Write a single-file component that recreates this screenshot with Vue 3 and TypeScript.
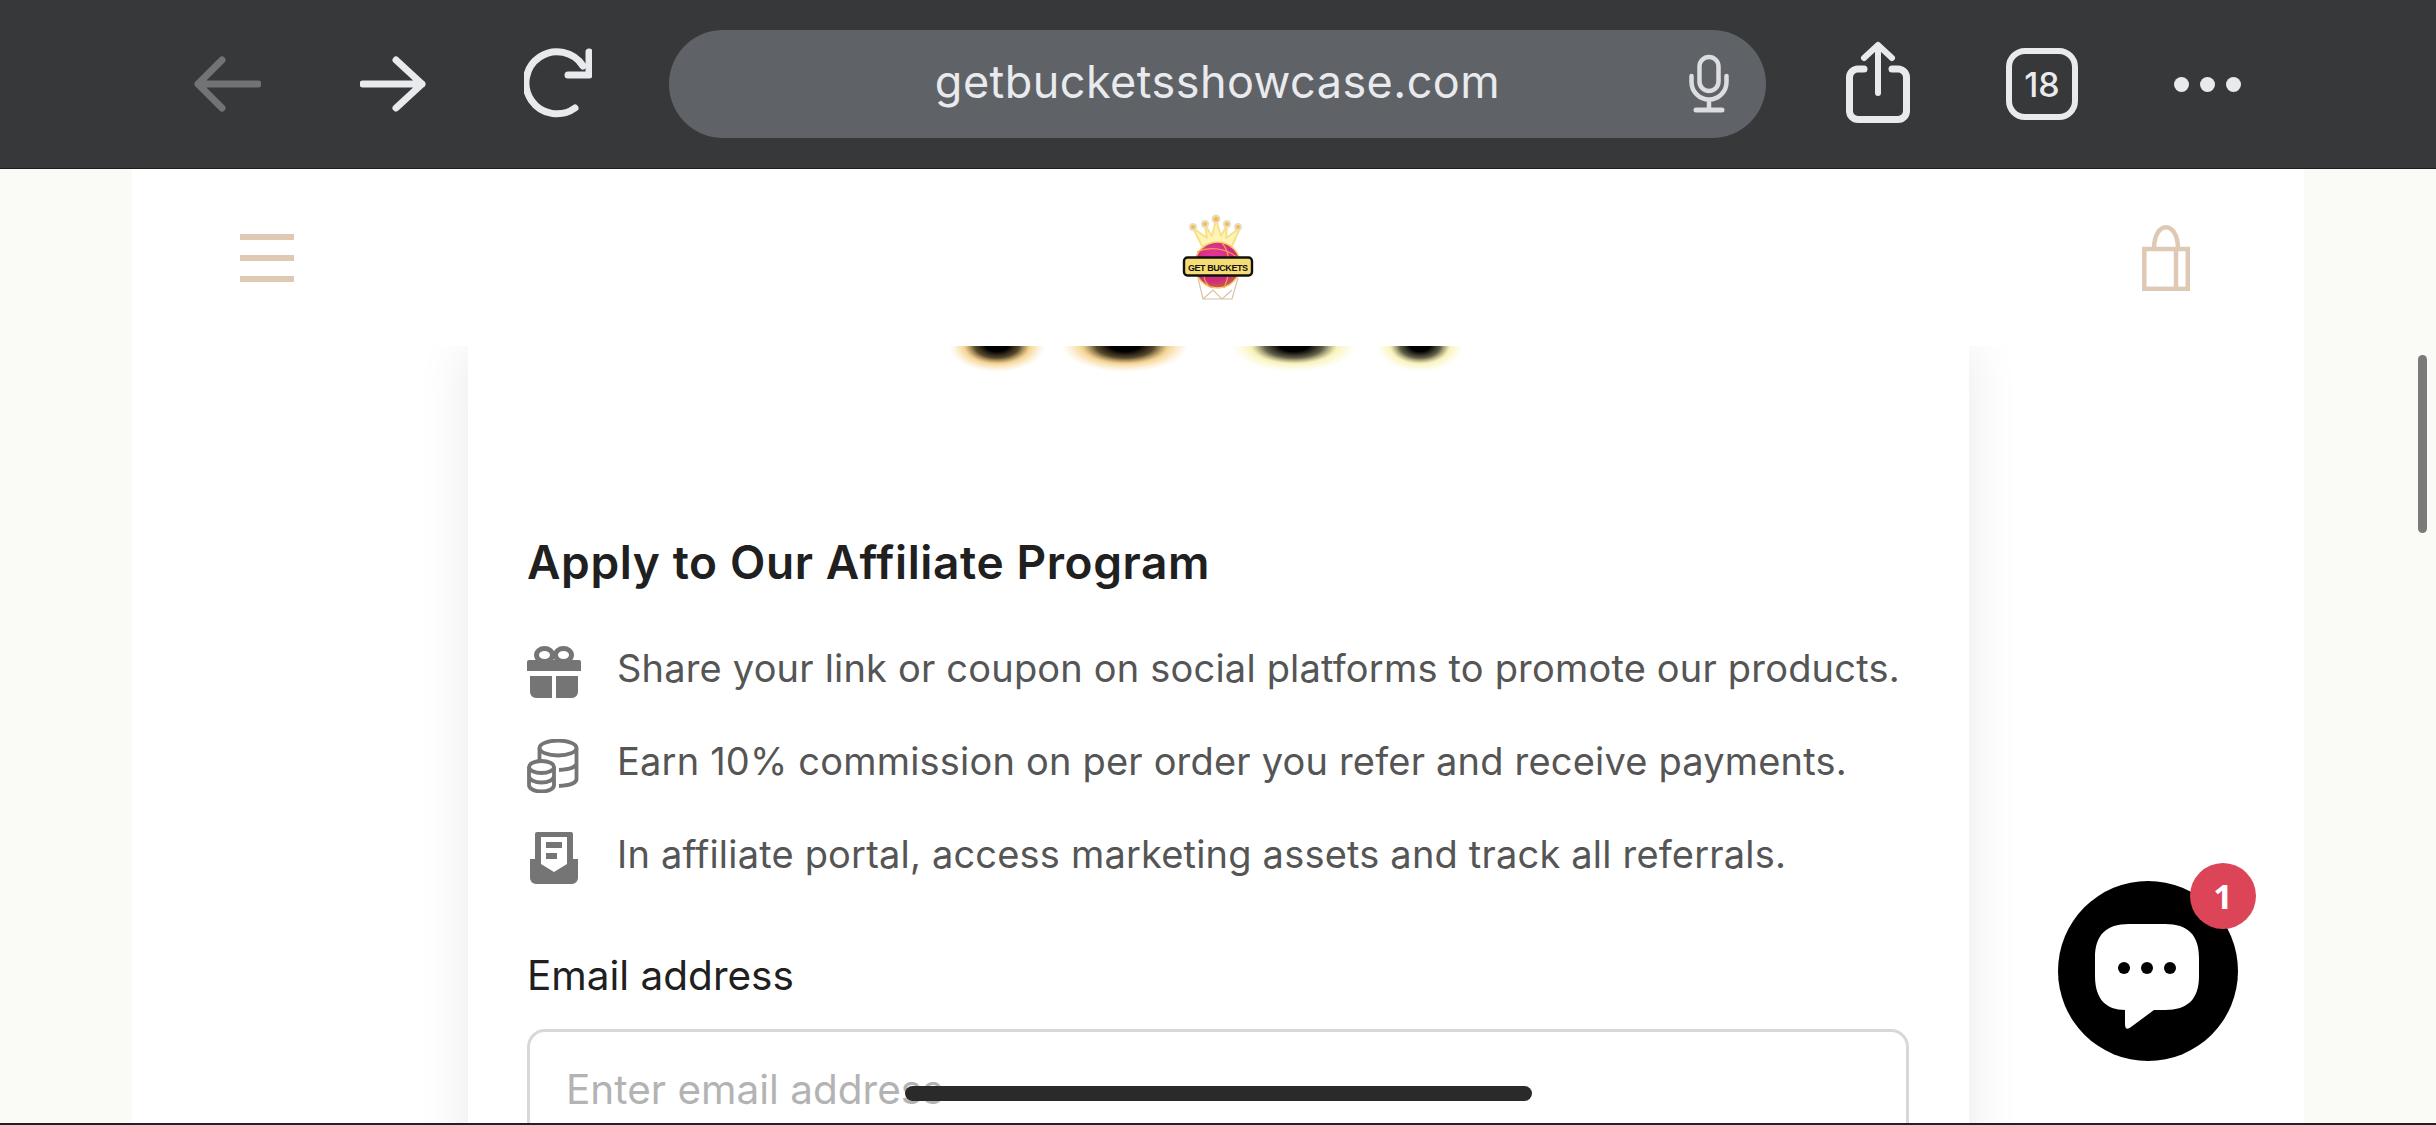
<script setup lang="ts">
const items: { icon: string; text: string }[] = [
  { icon: 'gift', text: 'Share your link or coupon on social platforms to promote our products.' },
  { icon: 'coins', text: 'Earn 10% commission on per order you refer and receive payments.' },
  { icon: 'inbox', text: 'In affiliate portal, access marketing assets and track all referrals.' },
]
</script>

<template>
  <div class="screen">
    <nav class="toolbar">
      <svg class="tool back" viewBox="194 0 67 168" fill="none" stroke="#727374" stroke-width="7" stroke-linecap="round" stroke-linejoin="round">
        <path d="M222 60 198 84 222 108M198 84H258" />
      </svg>
      <svg class="tool forward" viewBox="360 0 66 168" fill="none" stroke="#e9eaee" stroke-width="7" stroke-linecap="round" stroke-linejoin="round">
        <path d="M396 60 422 84 396 108M363 84H422" />
      </svg>
      <svg class="tool reload" viewBox="524 0 68 168" fill="none" stroke="#e9eaee" stroke-linecap="round" stroke-linejoin="round">
        <path stroke-width="7" d="M583 66A31 31 0 1 0 575 108" />
        <path stroke-width="7" d="M589 52V75H568" />
      </svg>
      <div class="address">
        <span class="url">getbucketsshowcase.com</span>
        <svg class="mic" viewBox="1689 50 40 66" fill="none" stroke="#dcdde0" stroke-linecap="round">
          <rect x="1699.500" y="57" width="19" height="34" rx="9.500" stroke-width="4.500" />
          <path stroke-width="4.500" d="M1691.500 76V82A17.500 17.500 0 0 0 1726.500 82V76M1709 100V109" />
          <path stroke-width="5" d="M1696 110H1722" />
        </svg>
      </div>
      <svg class="tool share" viewBox="1846 0 64 168" fill="none" stroke="#e9eaee" stroke-width="7" stroke-linecap="round" stroke-linejoin="round">
        <path d="M1864 69H1858A8.500 8.500 0 0 0 1849.500 77.500V111A8.500 8.500 0 0 0 1858 119.500H1898A8.500 8.500 0 0 0 1906.500 111V77.500A8.500 8.500 0 0 0 1898 69H1892" />
        <path stroke-width="6" d="M1878 93V47M1864 58 1878 45 1892 58" />
      </svg>
      <div class="tabs">18</div>
      <div class="more"><i></i><i></i><i></i></div>
    </nav>

    <div class="shell">
      <header class="site-header">
        <svg class="burger" viewBox="0 0 54 48" fill="#dfc9b5">
          <rect y="0" width="54" height="6" />
          <rect y="21" width="54" height="6" />
          <rect y="42" width="54" height="6" />
        </svg>
        <svg class="logo" viewBox="1140 169 160 177">
          <defs>
            <radialGradient id="ball" cx="42%" cy="35%" r="75%">
              <stop offset="0" stop-color="#e8379a" />
              <stop offset="0.65" stop-color="#cf2a7c" />
              <stop offset="1" stop-color="#c8763a" />
            </radialGradient>
          </defs>
          <path d="M1198 278 1203 299H1232L1238 278M1203 299 1213 290 1222 299 1232 290" fill="none" stroke="#d9c2a6" stroke-width="1.200" />
          <path d="M1202 246 1193 228 1207 238 1205 225 1212 236 1216 220 1221 236 1227 225 1226 238 1240 228 1232 246Z" fill="#fff4b4" stroke="#f6e28c" stroke-width="2" stroke-linejoin="round" />
          <g fill="#f0c13a" stroke="#eadccb" stroke-width="2">
            <circle cx="1193" cy="227" r="3" />
            <circle cx="1205" cy="224" r="3" />
            <circle cx="1216" cy="219" r="3.500" />
            <circle cx="1227" cy="224" r="3" />
            <circle cx="1238" cy="227" r="3" />
          </g>
          <circle cx="1217.500" cy="265" r="23" fill="url(#ball)" stroke="#f3d15f" stroke-width="1.500" />
          <path d="M1197 252C1210 246 1226 248 1238 258M1222 243C1230 252 1232 270 1224 288M1204 275C1204 280 1207 285 1212 288" fill="none" stroke="#f1a24f" stroke-width="1.200" />
          <rect x="1184" y="257.500" width="68" height="18" rx="3.500" fill="#f5dc74" stroke="#111" stroke-width="2.400" />
          <text x="1188" y="270.500" class="logo-text" textLength="60" lengthAdjust="spacing">GET BUCKETS</text>
        </svg>
        <svg class="bag" viewBox="2142 224 48 66" fill="none" stroke="#dfc9b5" stroke-width="4.500">
          <rect x="2144.300" y="248" width="43.500" height="39.800" />
          <path d="M2176 248V288M2154 248C2154 219 2178 219 2178 248" />
        </svg>
      </header>

      <main class="card">
        <svg class="banner-tail" viewBox="0 0 1380 186" preserveAspectRatio="none">
          <defs>
            <radialGradient id="orange">
              <stop offset="0" stop-color="#000" />
              <stop offset="0.22" stop-color="#000" />
              <stop offset="0.46" stop-color="#4a3a1c" stop-opacity="0.92" />
              <stop offset="0.68" stop-color="#efbd5c" stop-opacity="0.65" />
              <stop offset="1" stop-color="#f8d78b" stop-opacity="0" />
            </radialGradient>
            <radialGradient id="yellow">
              <stop offset="0" stop-color="#000" />
              <stop offset="0.22" stop-color="#000" />
              <stop offset="0.46" stop-color="#55523a" stop-opacity="0.92" />
              <stop offset="0.68" stop-color="#f5ed99" stop-opacity="0.65" />
              <stop offset="1" stop-color="#fbf6b8" stop-opacity="0" />
            </radialGradient>
          </defs>
          <ellipse cx="470" cy="0" rx="48" ry="26" fill="url(#orange)" />
          <ellipse cx="598" cy="0" rx="63" ry="26" fill="url(#orange)" />
          <ellipse cx="767" cy="0" rx="63" ry="26" fill="url(#yellow)" />
          <ellipse cx="893" cy="0" rx="44" ry="26" fill="url(#yellow)" />
        </svg>

        <h1 class="title">Apply to Our Affiliate Program</h1>

        <ul class="perks">
          <li v-for="item in items" :key="item.icon" class="perk">
            <svg class="perk-icon" viewBox="0 0 54 54">
              <g v-if="item.icon === 'gift'" fill="#757575">
                <path d="M2 14H52A2 2 0 0 1 54 16V25H0V16A2 2 0 0 1 2 14Z" />
                <path d="M3 30H25V52H9A6 6 0 0 1 3 46ZM29 30H51V46A6 6 0 0 1 45 52H29Z" />
                <ellipse cx="17.500" cy="9" rx="8" ry="6.500" fill="none" stroke="#757575" stroke-width="5" />
                <ellipse cx="36.500" cy="9" rx="8" ry="6.500" fill="none" stroke="#757575" stroke-width="5" />
              </g>
              <g v-else-if="item.icon === 'coins'" fill="none" stroke="#757575" stroke-width="3.800">
                <ellipse cx="31" cy="9" rx="18.500" ry="7.500" />
                <path d="M12.500 9V21M49.500 9V40C49.500 44 43 46.500 32 47M49.500 24C49.500 28 43 30.500 32 31" />
                <ellipse cx="14.500" cy="28" rx="12.500" ry="6" />
                <path d="M2 28V46C2 50 8 52.500 14.500 52.500 21 52.500 27 50 27 46V28M2 37C2 41 8 43.500 14.500 43.500 21 43.500 27 41 27 37" />
              </g>
              <path
                v-else
                fill="#757575"
                fill-rule="evenodd"
                d="M10 0H44A2 2 0 0 1 46 2V27H51V46A6 6 0 0 1 45 52H9A6 6 0 0 1 3 46V27H8V2A2 2 0 0 1 10 0ZM14 5V32L27 40 40 32V5ZM19 10H35V16H19ZM19 21H30V27H19Z"
              />
            </svg>
            <span class="perk-text">{{ item.text }}</span>
          </li>
        </ul>

        <label class="field-label" for="email">Email address</label>
        <input id="email" class="field" type="email" placeholder="Enter email address" />
      </main>
    </div>

    <div class="scrollbar"></div>

    <div class="chat">
      <svg class="bubble" viewBox="0 0 104 105">
        <path fill="#fff" d="M34 0H70C93 0 104 11 104 34V52C104 75 93 86 70 86H59L36 103C32 106 30 105 30 100V86C11 86 0 75 0 52V34C0 11 11 0 34 0Z" />
        <circle cx="29" cy="44" r="6" />
        <circle cx="52" cy="44" r="6" />
        <circle cx="75" cy="44" r="6" />
      </svg>
      <span class="badge">1</span>
    </div>

    <div class="home-indicator"></div>
  </div>
</template>

<style scoped>
.screen {
  position: relative;
  width: 2436px;
  height: 1125px;
  overflow: hidden;
  background: #fafbf6;
  font-family: Inter, "Liberation Sans", sans-serif;
  border-bottom: 2px solid #222;
  box-sizing: border-box;
}
.toolbar {
  display: flex;
  align-items: center;
  height: 168px;
  background: #37383a;
  border-bottom: 1px solid #1d1d1e;
}
.tool {
  height: 168px;
  flex: none;
}
.back { width: 67px; margin-left: 194px; }
.forward { width: 66px; margin-left: 99px; }
.reload { width: 68px; margin-left: 98px; }
.address {
  position: relative;
  flex: none;
  display: flex;
  align-items: center;
  justify-content: center;
  width: 1097px;
  height: 108px;
  margin-left: 77px;
  border-radius: 54px;
  background: #5f6266;
}
.url {
  margin-bottom: 5px;
  color: #e9eaee;
  font-size: 45px;
  letter-spacing: 0.45px;
}
.mic {
  position: absolute;
  left: 1020px;
  top: 20px;
  width: 40px;
  height: 66px;
}
.share { width: 64px; margin-left: 80px; }
.tabs {
  flex: none;
  display: flex;
  align-items: center;
  justify-content: center;
  box-sizing: border-box;
  width: 72px;
  height: 72px;
  margin-left: 96px;
  border: 6px solid #e9eaee;
  border-radius: 19px;
  color: #e9eaee;
  font-size: 34px;
  font-weight: 500;
}
.more {
  display: flex;
  gap: 11px;
  margin-left: 96px;
}
.more i {
  width: 15px;
  height: 15px;
  border-radius: 50%;
  background: #e9eaee;
}
.shell {
  height: 956px;
  margin: 0 132px;
  background: #fff;
  overflow: hidden;
}
.site-header {
  position: relative;
  z-index: 1;
  display: flex;
  align-items: center;
  justify-content: space-between;
  height: 177px;
  padding: 0 114px 0 108px;
  background: #fff;
}
.burger { width: 54px; height: 48px; }
.logo { width: 160px; height: 177px; margin-left: 4px; }
.bag { width: 48px; height: 66px; }
.card {
  box-sizing: border-box;
  width: 1501px;
  height: 900px;
  margin-left: 336px;
  padding: 0 60px 0 59px;
  background: #fff;
  box-shadow: 0 0 50px rgba(0, 0, 0, 0.09);
}
.banner-tail {
  display: block;
  width: 1380px;
  height: 186px;
}
.title {
  margin: 0 0 45px;
  color: #202020;
  font-size: 46px;
  font-weight: 600;
  letter-spacing: 0.62px;
  line-height: 60px;
}
.perks {
  display: flex;
  flex-direction: column;
  gap: 33px;
  margin: 0 0 69px;
  padding: 0;
  list-style: none;
}
.perk {
  display: flex;
  align-items: center;
  height: 60px;
}
.perk-icon {
  flex: none;
  width: 54px;
  height: 54px;
  margin: 12px 36px 0 0;
}
.perk-text {
  padding-top: 2px;
  color: #555;
  font-size: 38px;
  letter-spacing: 0.19px;
  white-space: nowrap;
}
.field-label {
  display: block;
  margin-bottom: 29px;
  color: #202020;
  font-size: 40.500px;
  line-height: 48px;
}
.field {
  display: block;
  box-sizing: border-box;
  width: 100%;
  height: 120px;
  padding: 0 36px;
  border: 3px solid #d5d9dc;
  border-radius: 18px;
  background: #fff;
  font-family: inherit;
  font-size: 40.500px;
  outline: none;
}
.field::placeholder {
  color: #b3b3b3;
  opacity: 1;
}
.scrollbar {
  position: absolute;
  left: 2418px;
  top: 355px;
  width: 9px;
  height: 178px;
  border-radius: 5px;
  background: #7a7a78;
}
.chat {
  position: absolute;
  left: 2058px;
  top: 881px;
  display: flex;
  align-items: center;
  justify-content: center;
  width: 180px;
  height: 180px;
  border-radius: 50%;
  background: #000;
}
.bubble {
  width: 104px;
  height: 105px;
  margin: 11px 0 0 -2px;
}
.badge {
  position: absolute;
  left: 132px;
  top: -18px;
  width: 66px;
  height: 66px;
  border-radius: 50%;
  background: #dc4558;
  color: #fff;
  font-family: "Open Sans", Inter, sans-serif;
  font-size: 34px;
  font-weight: 700;
  line-height: 66px;
  text-align: center;
}
.home-indicator {
  position: absolute;
  left: 905px;
  top: 1086px;
  width: 627px;
  height: 15px;
  border-radius: 8px;
  background: #2a2a2a;
}
.logo-text {
  font-family: "Liberation Sans", sans-serif;
  font-size: 9px;
  font-weight: 700;
  fill: #111;
}
</style>

<style>
html, body { margin: 0; background: #fafbf6; }
</style>
